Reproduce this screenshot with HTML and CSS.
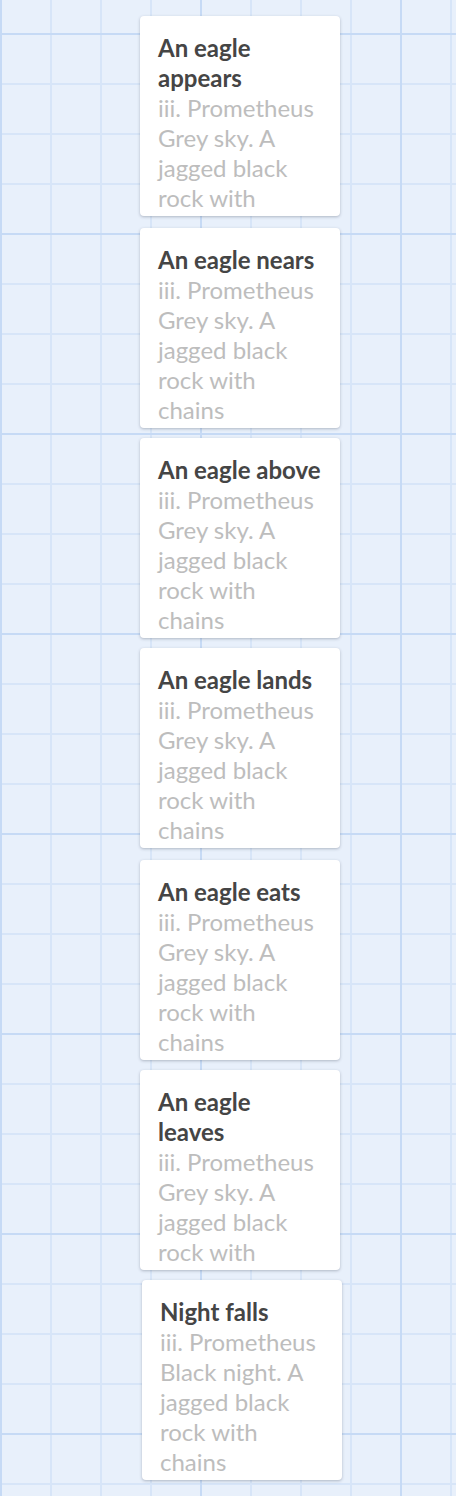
FILE: index.html
```html
<!DOCTYPE html>
<html lang="en">
<head>
<meta charset="utf-8">
<title>Story map</title>
<link rel="stylesheet" href="styles.css">
</head>
<body>
<main class="map">
  <article class="passage" style="left:140px;top:16px">
    <h2 class="passage-title">An eagle appears</h2>
    <p class="passage-excerpt">iii. Prometheus<br>Grey sky. A jagged black rock with chains</p>
  </article>
  <article class="passage" style="left:140px;top:228px">
    <h2 class="passage-title">An eagle nears</h2>
    <p class="passage-excerpt">iii. Prometheus<br>Grey sky. A jagged black rock with chains</p>
  </article>
  <article class="passage" style="left:140px;top:438px">
    <h2 class="passage-title">An eagle above</h2>
    <p class="passage-excerpt">iii. Prometheus<br>Grey sky. A jagged black rock with chains</p>
  </article>
  <article class="passage" style="left:140px;top:648px">
    <h2 class="passage-title">An eagle lands</h2>
    <p class="passage-excerpt">iii. Prometheus<br>Grey sky. A jagged black rock with chains</p>
  </article>
  <article class="passage" style="left:140px;top:860px">
    <h2 class="passage-title">An eagle eats</h2>
    <p class="passage-excerpt">iii. Prometheus<br>Grey sky. A jagged black rock with chains</p>
  </article>
  <article class="passage" style="left:140px;top:1070px">
    <h2 class="passage-title">An eagle leaves</h2>
    <p class="passage-excerpt">iii. Prometheus<br>Grey sky. A jagged black rock with chains</p>
  </article>
  <article class="passage" style="left:142px;top:1280px">
    <h2 class="passage-title">Night falls</h2>
    <p class="passage-excerpt">iii. Prometheus<br>Black night. A jagged black rock with chains</p>
  </article>
</main>
</body>
</html>
```

FILE: styles.css
```css
html, body {
  margin: 0;
  padding: 0;
}

body {
  font-family: Lato, "Liberation Sans", sans-serif;
}

.map {
  position: relative;
  width: 456px;
  height: 1496px;
  overflow: hidden;
  background-color: #e8f0fb;
  background-image:
    linear-gradient(to right, #c6daf5 2px, transparent 2px),
    linear-gradient(to bottom, #c6daf5 2px, transparent 2px),
    linear-gradient(to right, #d7e5f8 2px, transparent 2px),
    linear-gradient(to bottom, #d7e5f8 2px, transparent 2px);
  background-size: 200px 200px, 200px 200px, 50px 50px, 50px 50px;
  background-position: 0 0, 0 33px, 0 0, 0 33px;
}

.passage {
  position: absolute;
  box-sizing: border-box;
  width: 200px;
  height: 200px;
  padding: 17px 18px 0;
  overflow: hidden;
  background: #fff;
  border-radius: 4px;
  box-shadow: 0 1px 3px rgba(40, 50, 70, 0.3);
}

.passage-title {
  margin: 0;
  font-size: 24px;
  line-height: 30px;
  font-weight: 700;
  color: #454545;
}

.passage-excerpt {
  margin: 0;
  font-size: 24px;
  line-height: 30px;
  font-weight: 400;
  color: #bdbdbd;
}
```
